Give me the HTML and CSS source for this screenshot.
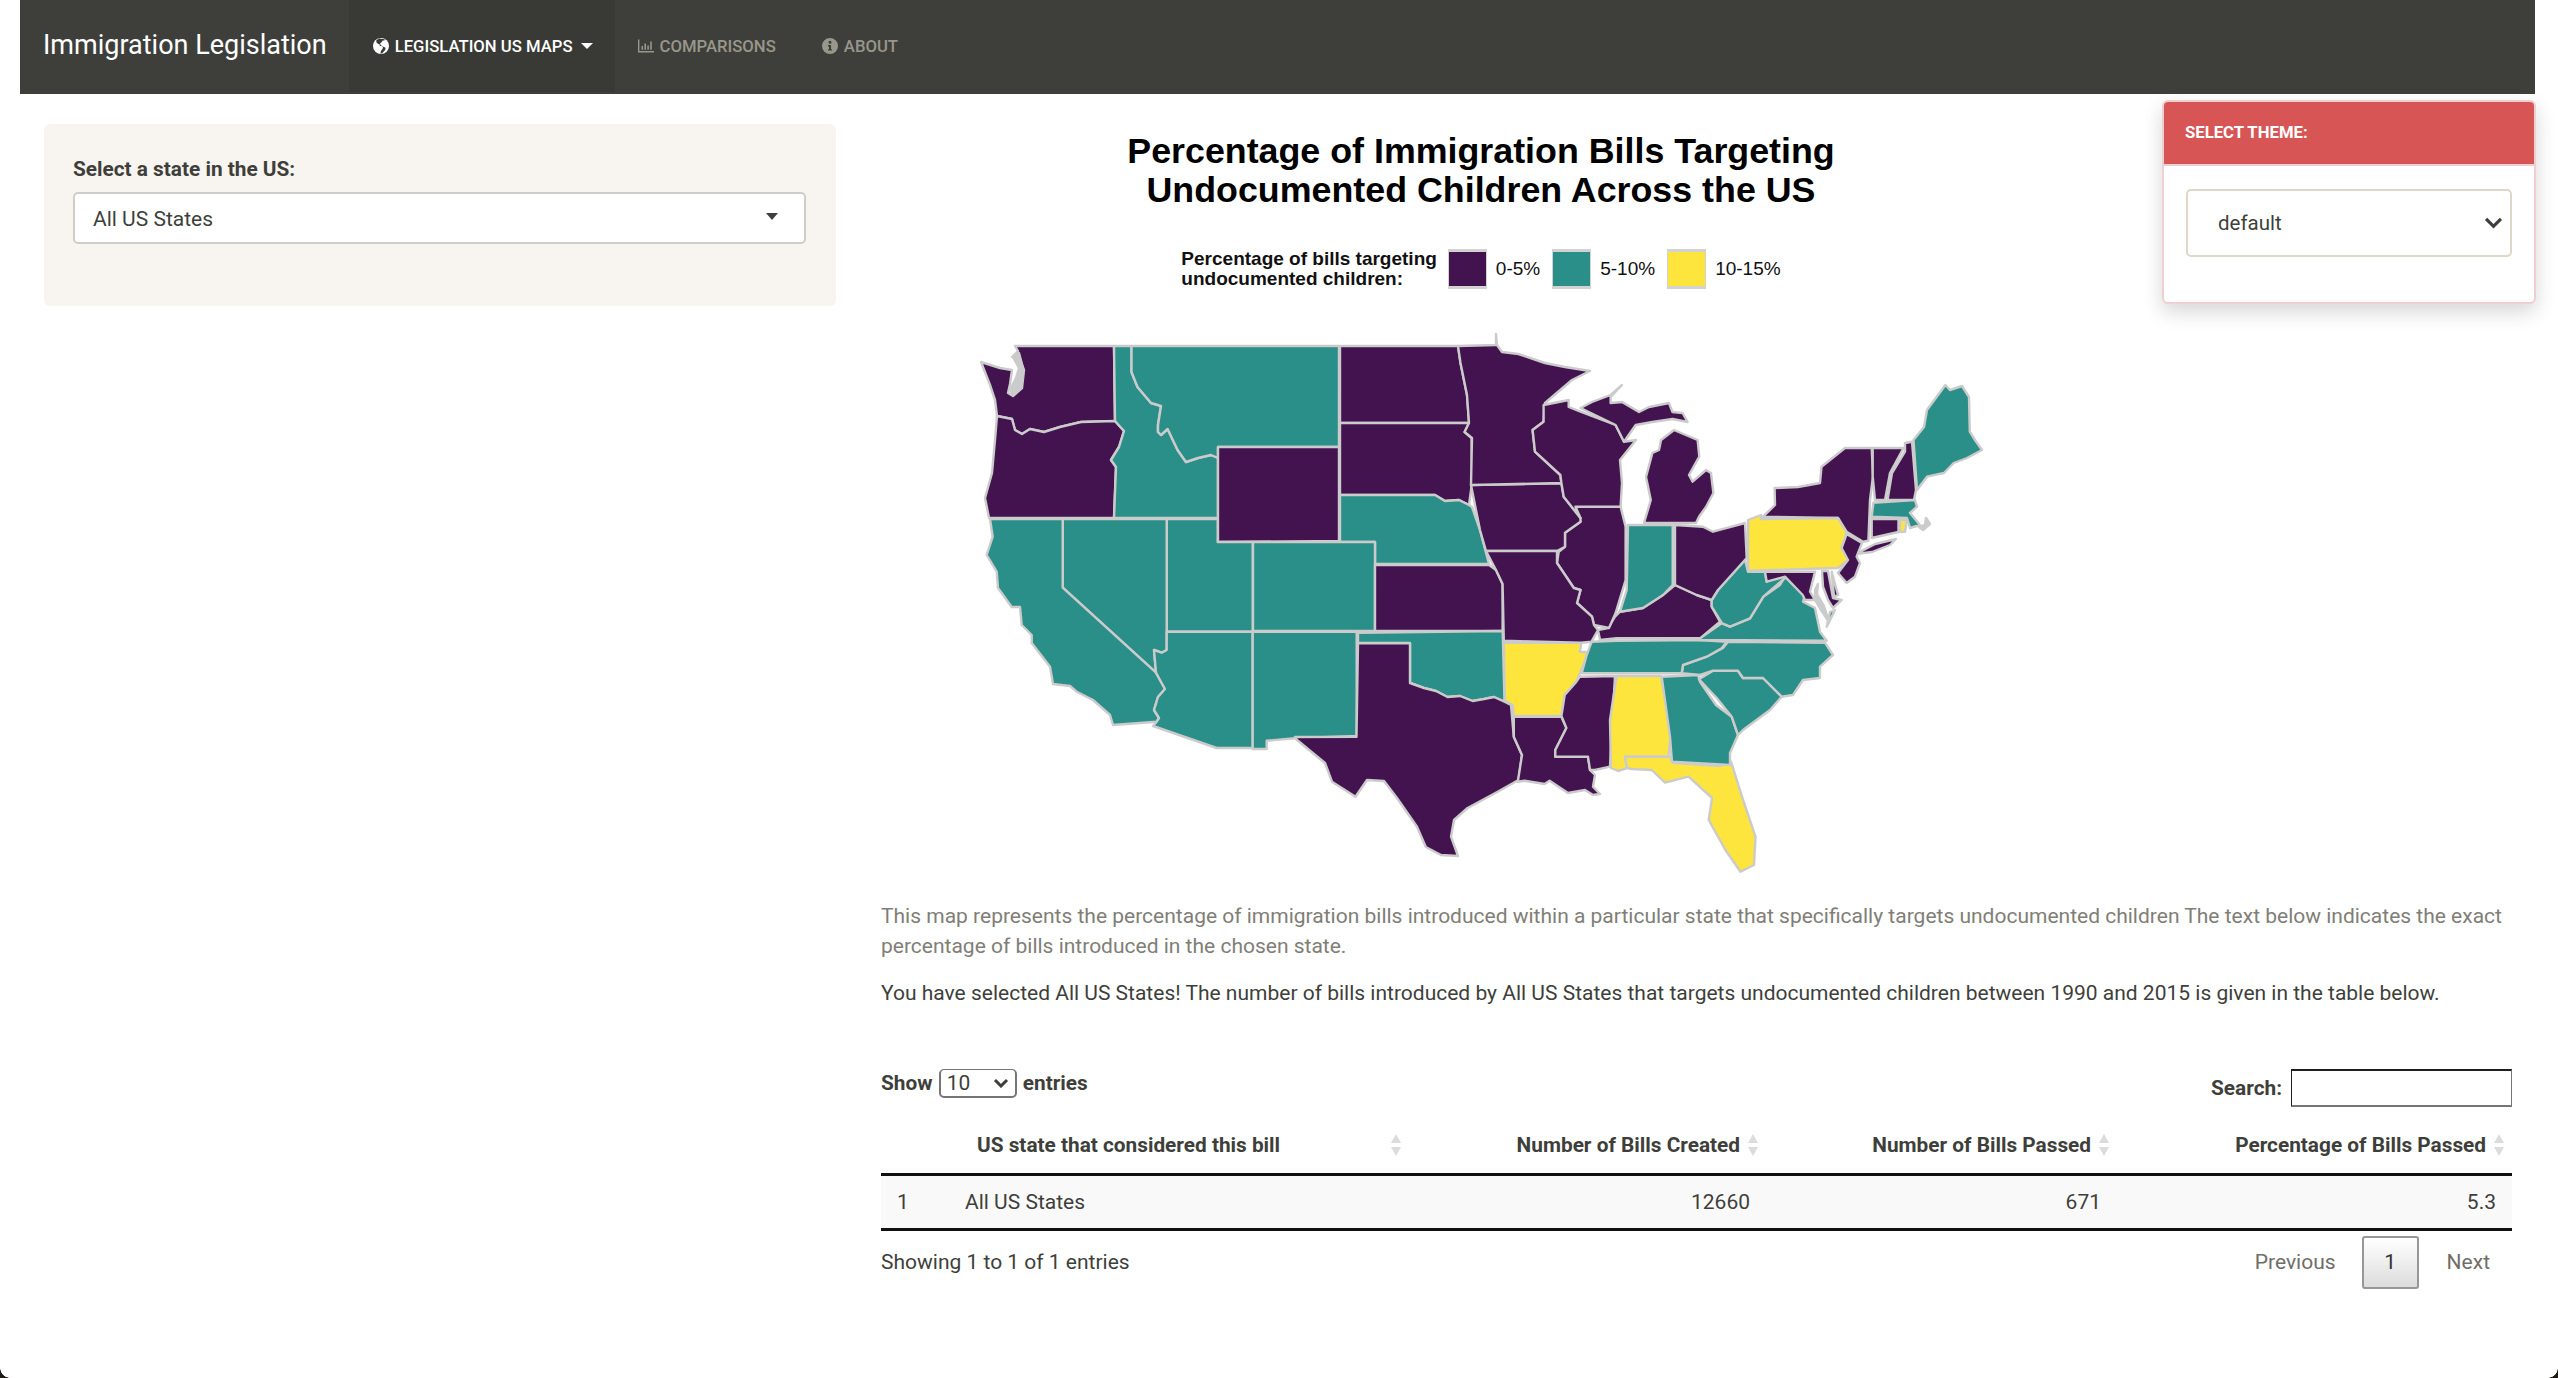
FILE: index.html
```html
<!DOCTYPE html>
<html lang="en">
<head>
<meta charset="utf-8">
<title>Immigration Legislation</title>
<link rel="stylesheet" href="styles.css">
</head>
<body>
<div class="page">
  <nav class="navbar">
    <a class="brand">Immigration Legislation</a>
    <a class="nav-link active">
      <svg class="ico" viewBox="0 0 16 16"><circle cx="8" cy="8" r="8" fill="#fff"/><path class="ico-cut" d="M6 .6 3.2 2.6l.4 2.2 2.2 1.4 2 .2.6 1.6 1.6 1-.6 2.2-1.4 1.6-.6 2.6 1.8-.2 3-3.2.4-2.2-2.2-1-1.8-1-1.6.2-.6-1.4L9 3.600l.8-1 1.600-.2.400-1.200z"/></svg>
      LEGISLATION US MAPS
      <span class="caret"></span>
    </a>
    <a class="nav-link">
      <svg class="ico" viewBox="0 0 16 16"><path class="ico-muted" d="M0 1.500h1.400v11.600H16v1.400H0z"/><path class="ico-muted" d="M3.500 8h1.600v3.800H3.500zM6.400 5.500H8v6.300H6.400zM9.300 7.500h1.600v4.300H9.300zM12.200 3.500h1.600v8.300h-1.600z"/></svg>
      COMPARISONS
    </a>
    <a class="nav-link">
      <svg class="ico" viewBox="0 0 16 16"><path class="ico-muted" fill-rule="evenodd" d="M8 0a8 8 0 1 1 0 16A8 8 0 0 1 8 0zM8 2.800a1.500 1.500 0 1 0 0 3 1.500 1.500 0 0 0 0-3zM6 7v1.400h1v2.800H6v1.400h4v-1.400H9V7z"/></svg>
      ABOUT
    </a>
  </nav>

  <div class="layout">
    <aside class="well">
      <div class="field-label">Select a state in the US:</div>
      <div class="fake-select">
        <span>All US States</span>
        <span class="select-caret"></span>
      </div>
    </aside>

    <main class="main">
      <section class="plot">
        <h2 class="plot-title">Percentage of Immigration Bills Targeting<br>Undocumented Children Across the US</h2>
        <div class="legend">
          <div class="legend-title">Percentage of bills targeting<br>undocumented children:</div>
          <span class="swatch s-p"></span><span class="legend-text">0-5%</span>
          <span class="swatch s-t"></span><span class="legend-text">5-10%</span>
          <span class="swatch s-y"></span><span class="legend-text">10-15%</span>
        </div>
        <svg class="map" viewBox="881 300 1200 590" width="1200" height="590" role="img" aria-label="US map">
          <g class="st">
            <!-- WA -->
            <path class="p" d="M1015 346H1114L1115 421 1081 422 1060 427 1044 432 1030 429 1022 434 1015 430 1012 419 997 416 995 400 990 385 981 362 1000 368 1012 370 1010 384 1008 393 1013 396 1022 388 1024 370 1020 360 1012 357 1018 351Z"/>
            <!-- Puget Sound -->
            <path class="g" d="M1013 357 1019 353 1023 368 1021 387 1013 395 1010 390 1016 378 1019 368Z"/>
            <!-- OR -->
            <path class="p" d="M997 416 1012 419 1015 430 1022 434 1030 429 1044 432 1060 427 1081 422 1115 421 1124 431 1119 447 1111 460 1116 467 1114 518H989L985 498 992 473 995 440Z"/>
            <!-- ID -->
            <path class="t" d="M1114 346H1131.500V372L1137.500 387 1151 403 1161 406 1158 425 1158 432 1161 435 1167.600 429 1177.600 450 1186 462 1198 458 1211 455 1218 458V518H1114L1116 467 1111 460 1119 447 1124 431 1115 421Z"/>
            <!-- MT -->
            <path class="t" d="M1131.500 346H1339V447H1218V458L1211 455 1198 458 1186 462 1177.600 450 1167.600 429 1161 435 1158 432 1158 425 1161 406 1151 403 1137.500 387 1131.500 372Z"/>
            <!-- WY -->
            <path class="p" d="M1218 447H1339V541L1218 542Z"/>
            <!-- ND -->
            <path class="p" d="M1340 346H1458L1460.500 363 1467 395 1469 423H1340Z"/>
            <!-- SD -->
            <path class="p" d="M1340 423H1469L1464.600 432 1471.600 438 1472 483 1469 505 1459 500 1445 501 1435 495H1340Z"/>
            <!-- NE -->
            <path class="t" d="M1340 495H1435L1445 501 1459 500 1469 505 1472 507 1480 530 1489 564H1375V542H1340Z"/>
            <!-- CO -->
            <path class="t" d="M1253 542H1375V631H1253Z"/>
            <!-- KS -->
            <path class="p" d="M1375 565H1489L1496 570 1502.600 584V631H1375Z"/>
            <!-- UT -->
            <path class="t" d="M1166.700 519H1217.700V542H1252.700V631.700H1166.700Z"/>
            <!-- NV -->
            <path class="t" d="M1062.700 519H1166.700V650L1161.700 652.700 1154 650 1156 672.700 1062.700 587.700Z"/>
            <!-- CA -->
            <path class="t" d="M990 519H1062.700V587.700L1156 672.700 1160 680 1165 689 1158 697 1154 710 1159 718 1156.700 721.700 1113 725 1110 715 1093 700 1076.700 691.700 1070 686 1053 684 1050 666.700 1031.700 643V635L1021.700 625 1020 607H1011.700L998 588 996.700 571.700 986.700 555 992.700 536.700Z"/>
            <!-- AZ -->
            <path class="t" d="M1166.700 631.700H1252.700V748H1216.700L1153 726 1156.700 721.700 1159 718 1154 710 1158 697 1165 689 1160 680 1156 672.700 1154 650 1161.700 652.700 1166.700 650Z"/>
            <!-- NM -->
            <path class="t" d="M1252.700 631.700H1356.700V736L1295 738.300 1266.700 740.700V749H1252.700Z"/>
            <!-- OK -->
            <path class="t" d="M1358 632.700 1502.700 631 1504.500 701.700 1494 697 1484 699 1472.600 701 1460 696 1447.500 697 1436 691 1424 688 1410 683V643H1358Z"/>
            <!-- TX -->
            <path class="p" d="M1358 643.300H1410V683L1424 688 1436 691 1447.500 697 1460 696 1472.600 701 1484 699 1494 697 1505 702 1511 705 1513.800 736.700 1522 755 1518.500 780 1497.700 791.700 1467.600 808 1454 820 1451 836.700 1458 856 1441 855 1425.800 847 1417 826.700 1397 798 1384 781 1367 780 1355.500 796.700 1332 781.700 1325 763 1297 740 1295 737 1356.500 736.700Z"/>
            <!-- AR -->
            <path class="y" d="M1503.800 642.700H1581.400L1579.800 651.700 1588 652.300 1581.400 670 1576.400 681.700 1564.700 695 1561.400 716H1513.800L1512.800 705 1505 701Z"/>
            <!-- LA -->
            <path class="p" d="M1513.800 716.700H1561.400L1566.400 728 1555.300 750V756.700H1588L1590 770 1595 775 1593 786.700 1600 794 1593 795 1585 790 1568 793 1549.600 780.700 1544.600 784 1524.500 780.700 1517.800 781.700 1522 755 1513.800 736.700Z"/>
            <!-- MS -->
            <path class="p" d="M1579.800 676.700 1615 676 1610 766.700 1595 770 1590 770 1588 756.700H1555.300V750L1566.400 728 1561.400 716 1564.700 695 1576.400 681.700Z"/>
            <!-- AL -->
            <path class="y" d="M1616.600 676H1661L1671 730 1668.500 756.700H1625L1627 768 1618 771 1611 768 1610 720Z"/>
            <!-- FL -->
            <path class="y" d="M1625 756.700H1670L1672.500 762.700 1720 766 1731 761.700 1742 796.700 1755.500 836.700 1754 865 1740.500 871.700 1725.400 850 1708.700 820 1712 798 1688.600 776.700 1665 782.700 1651.700 770 1631.600 769 1627 768Z"/>
            <!-- GA -->
            <path class="t" d="M1661.700 676.700 1698 675 1700 681.700 1716 705 1731.700 716.700 1738 735 1730 753V765L1672 761.700 1670 737Z"/>
            <!-- SC -->
            <path class="t" d="M1699 679.300 1713 670.700H1738L1743 678H1763L1781.700 696.700 1770 710 1743 730 1738 735 1731.700 716.700 1716.700 698Z"/>
            <!-- NC -->
            <path class="t" d="M1728 641.700 1825 642.700 1833 655 1820 666.700V678L1803 680 1793 695 1781.700 696.700 1763 678H1743L1738 670.700H1713L1700 675 1681.700 673.300 1683 665 1706.700 656.700 1723 648Z"/>
            <!-- TN -->
            <path class="t" d="M1591.700 641.700 1616.700 640.700 1700 640 1726.700 641.700 1722 648 1706.700 656.700 1683 665 1681.700 673.300H1581.700L1586.700 655Z"/>
            <!-- VA -->
            <path class="t" d="M1700 638.300 1721.700 623.300 1730 626.700 1750 618.300 1763.300 596.700 1780 585 1785 576.700 1805 595 1803 601.700 1815 608 1820 631.700 1826.700 640.700 1700 640Z"/>
            <!-- KY -->
            <path class="p" d="M1600 640 1616.700 638.300H1693L1700 638.300 1720 621.700 1711.700 606.700V600L1696.700 595 1675 585 1663 595 1643 608 1620 611.700 1615 616.700 1608 628 1598 630Z"/>
            <!-- WV -->
            <path class="t" d="M1711.700 600 1718 590 1745 560 1748 571.700H1765L1766.700 581.700 1783 575 1785 578 1763.300 596.700 1750 618.300 1730 626.700 1721.700 623 1711.700 606.700Z"/>
            <!-- OH -->
            <path class="p" d="M1675 525 1703 526.700 1713 531.700 1745 523 1746.700 558 1718 590 1711.700 600 1696.700 595 1675 585Z"/>
            <!-- IN -->
            <path class="t" d="M1628 525H1672.700V585L1663 595 1643 608 1620 611.700 1626.700 590Z"/>
            <!-- IL -->
            <path class="p" d="M1575.400 506.700H1620.600L1625.600 526.700V580L1615.600 613 1609 628 1594 625 1592 616.700 1577 603 1580.500 590 1573.800 588 1557 563 1558.700 551.700 1565 546.700V532.700L1580.500 521.700Z"/>
            <!-- IA -->
            <path class="p" d="M1471 485 1561.400 483.300 1563.700 496.700 1580.500 518V521.700L1565 532.700V546.700L1557 551 1486 551 1480 530Z"/>
            <!-- MO -->
            <path class="p" d="M1486 551H1557V563L1573.800 588 1580.500 590 1577 603 1592 616.700 1594 625 1598 630 1591.500 641.700 1581 642.700 1503.800 640.700 1502.600 584 1496 570Z"/>
            <!-- MN -->
            <path class="p" d="M1458 346 1496 345V334L1497 345 1502 352 1518.500 354 1545 363 1565 367 1590 371 1572 380 1545 403 1543.600 421.700 1532.600 430 1535 451.700 1560.400 475 1561.400 483 1471 485 1472 438 1464.600 432 1469 423 1467 395 1460.500 363Z"/>
            <!-- WI -->
            <path class="p" d="M1543.600 405 1568.700 400 1568.700 407 1580.500 411.700 1615.600 425 1624 441.700 1636 440 1620 460 1622 483 1620.600 506.700H1575.400L1580.500 518 1563.700 496.700 1561.400 483 1560.400 475 1535 451.700 1532.600 430 1543.600 421.700Z"/>
            <!-- MI up -->
            <path class="p" d="M1580.500 408 1592 402 1610.600 395 1622 385 1610.600 397V403L1622 402 1639 412 1649 407 1669 403 1672.500 412 1682.600 413 1687.600 422 1672.500 419 1652.400 422 1635.700 425 1624 441.700 1615.600 425Z"/>
            <!-- MI low -->
            <path class="p" d="M1674 430 1697.600 440 1699.300 456.700 1689 475 1692.600 481.700 1706 470 1711 473 1713.400 493 1706 507 1699 516.700 1696 523H1644L1650.800 500 1646 477 1652.400 453 1659 450 1661 440Z"/>
            <!-- NY -->
            <path class="p" d="M1763 516.700 1775 505 1774.600 488 1798 487 1820 483 1821.500 466.700 1845 448H1871.700L1873 476 1870 500 1868.400 540.800 1863 541.700 1846.600 531.700 1838 518Z"/>
            <!-- LI -->
            <path class="p" d="M1856 554 1875 544 1896 539 1890 545 1872 552Z"/>
            <!-- PA -->
            <path class="y" d="M1748 520 1761 515V519L1838 518 1846.600 533 1841.600 548 1848.300 560 1838 568 1748 570.700Z"/>
            <!-- NJ -->
            <path class="p" d="M1846.600 534 1862 543 1856.600 556.700 1860 563 1855 576.700 1846.600 583 1838 573 1848 560 1841.600 548Z"/>
            <!-- VT -->
            <path class="p" d="M1872.700 448H1903.500L1890 473 1885 500H1875L1872.700 476.700Z"/>
            <!-- NH -->
            <path class="p" d="M1905 443 1912 441.700 1916 490 1914 500H1887.500L1892 473 1905 451.700Z"/>
            <!-- ME -->
            <path class="t" d="M1913.500 440 1924 427 1927 410 1945.400 385 1950 390 1962 386 1969 397 1969.800 431.700 1975 440 1982 450 1967 458 1953.700 463 1944 473 1927 476.700 1917 490Z"/>
            <!-- MA -->
            <path class="t" d="M1873.400 502.700 1915 500 1917 506.700 1910 513 1920 525 1910 528 1907 518 1871.700 516.700Z"/>
            <!-- CT -->
            <path class="p" d="M1871.700 519H1898.500V532L1871.700 538Z"/>
            <!-- RI -->
            <path class="y" d="M1900 520H1907L1905 531.700 1900 532Z"/>
            <!-- MD -->
            <path class="p" d="M1765 571.700H1815L1810 591.700 1815 600H1805L1802.700 595 1785 576.700 1766.700 581.700Z"/>
            <path class="p" d="M1822 571H1828L1833 598 1841.700 600 1833 608 1828 600 1823 586.700Z"/>
            <!-- DE -->
            <path class="p" d="M1831.700 571.700 1838 595 1834 596.700Z"/>
            <!-- Chesapeake -->
            <path class="g" d="M1818 584 1817 594 1824 606 1829 622 1821 610 1815 600 1815 590Z"/>
            <!-- VA shore -->
            <path class="t" d="M1835 610 1826.700 626.700 1830 612Z"/>
            <!-- Cape -->
            <path class="g" d="M1919 527 1925 525 1926 518 1930 524 1923 530Z"/>
          </g>
        </svg>
      </section>

      <p class="muted-copy">This map represents the percentage of immigration bills introduced within a particular state that specifically targets undocumented children The text below indicates the exact percentage of bills introduced in the chosen state.</p>
      <p class="copy">You have selected All US States! The number of bills introduced by All US States that targets undocumented children between 1990 and 2015 is given in the table below.</p>

      <div class="dt-top">
        <label class="dt-length">Show <select class="len"><option>10</option></select> entries</label>
        <label class="dt-search">Search: <input class="search" type="text"></label>
      </div>

      <table class="dt">
        <colgroup><col class="c1"><col class="c2"><col class="c3"><col class="c4"><col class="c5"></colgroup>
        <thead>
          <tr>
            <th></th>
            <th><div class="th-in th-left"><span>US state that considered this bill</span><svg class="sort" viewBox="0 0 12 22"><path d="M6 0 11 9H1zM6 22 1 13H11z"/></svg></div></th>
            <th><div class="th-in"><span>Number of Bills Created</span><svg class="sort" viewBox="0 0 12 22"><path d="M6 0 11 9H1zM6 22 1 13H11z"/></svg></div></th>
            <th><div class="th-in"><span>Number of Bills Passed</span><svg class="sort" viewBox="0 0 12 22"><path d="M6 0 11 9H1zM6 22 1 13H11z"/></svg></div></th>
            <th><div class="th-in"><span>Percentage of Bills Passed</span><svg class="sort" viewBox="0 0 12 22"><path d="M6 0 11 9H1zM6 22 1 13H11z"/></svg></div></th>
          </tr>
        </thead>
        <tbody>
          <tr>
            <td>1</td>
            <td>All US States</td>
            <td class="num">12660</td>
            <td class="num">671</td>
            <td class="num">5.3</td>
          </tr>
        </tbody>
      </table>

      <div class="dt-bottom">
        <div class="dt-info">Showing 1 to 1 of 1 entries</div>
        <div class="pager">
          <a class="pg">Previous</a>
          <a class="pg current">1</a>
          <a class="pg">Next</a>
        </div>
      </div>
    </main>
  </div>
</div>

<aside class="theme-panel">
  <div class="theme-head">SELECT THEME:</div>
  <div class="theme-body">
    <select class="theme-select"><option>default</option></select>
  </div>
</aside>
<span class="corner corner-l"></span>
<span class="corner corner-r"></span>
</body>
</html>
```

FILE: styles.css
```css
* { box-sizing: border-box; }
html, body { margin: 0; padding: 0; background: #fff; }
body {
  font-family: Roboto, "Liberation Sans", sans-serif;
  font-size: 21px;
  color: #3e3f3a;
  height: 1378px;
  overflow: hidden;
}
.page { margin-left: 20px; width: 2515px; }

/* navbar */
.navbar {
  display: flex;
  align-items: stretch;
  height: 94px;
  background: #3e3f3a;
  padding-left: 23px;
}
.brand {
  color: #fff;
  font-size: 27px;
  line-height: 90px;
  margin-right: 22px;
}
.nav-link {
  display: flex;
  align-items: center;
  gap: 6px;
  height: 92px;
  padding: 0 23px;
  color: #98978b;
  font-size: 16.700px;
  font-weight: 500;
}
.nav-link.active { background: #393a35; color: #fff; padding: 0 22px 0 24px; }
.ico { width: 16px; height: 16px; flex: none; }
.ico-cut { fill: #393a35; }
.ico-muted { fill: #98978b; }
.caret {
  width: 0; height: 0;
  margin-left: 2px;
  border-left: 6px solid transparent;
  border-right: 6px solid transparent;
  border-top: 6px solid #fff;
}

/* layout */
.layout {
  display: grid;
  grid-template-columns: 792px 1631px;
  column-gap: 45px;
  align-items: start;
  padding: 30px 0 0 24px;
}
.well {
  height: 182px;
  background: #f8f5f0;
  border-radius: 6px;
  padding: 33px 30px 0 29px;
}
.field-label { font-weight: 700; font-size: 20.800px; line-height: 24px; margin-bottom: 11px; }
.fake-select {
  display: flex;
  align-items: center;
  justify-content: space-between;
  height: 52px;
  padding: 2px 26px 0 18px;
  background: #fff;
  border: 2px solid #cfcdc9;
  border-radius: 5px;
}
.select-caret {
  width: 0; height: 0;
  margin-top: -5px;
  border-left: 6.500px solid transparent;
  border-right: 6.500px solid transparent;
  border-top: 7px solid #3e3f3a;
}

/* plot */
.plot { width: 1200px; padding-top: 8px; }
.plot-title {
  margin: 0;
  font-family: "Liberation Sans", Arial, sans-serif;
  font-size: 35.800px;
  font-weight: 700;
  line-height: 39px;
  text-align: center;
  color: #000;
}
.legend {
  display: flex;
  justify-content: center;
  align-items: center;
  margin-top: 39px;
  height: 40px;
  font-family: "Liberation Sans", Arial, sans-serif;
  font-size: 19px;
  color: #111;
}
.legend-title { font-weight: 700; line-height: 20.500px; margin-right: 11px; }
.swatch { width: 39px; height: 40px; border: 3px solid #d2d2d2; border-width: 3px 1px; }
.legend-text { margin: 0 12px 0 9px; }
.legend-text:last-child { margin-right: 0; }
.s-p { background: #431350; }
.s-t { background: #2a8f89; }
.s-y { background: #fde53d; }

.map { display: block; margin-top: 11px; filter: blur(.35px); }
.st path { stroke: #cbcbcb; stroke-width: 2.400; stroke-linejoin: round; }
.p { fill: #431350; }
.t { fill: #2a8f89; }
.y { fill: #fde53d; }
.g { fill: #cbcbcb; }

/* copy */
.muted-copy, .copy { margin: 0; line-height: 29.500px; }
.muted-copy { margin-top: 12px; color: #807e76; }
.copy { margin-top: 17.500px; }

/* data table */
.dt-top {
  display: flex;
  justify-content: space-between;
  align-items: flex-start;
  margin-top: 61px;
  font-weight: 700;
  font-size: 20.800px;
}
.len {
  appearance: none;
  width: 78px;
  height: 29px;
  margin: 0 1px;
  padding: 0 0 0 6px;
  font: 400 21px Roboto, sans-serif;
  color: #3e3f3a;
  background: #fff url("data:image/svg+xml;utf8,<svg xmlns='http://www.w3.org/2000/svg' viewBox='0 0 16 10'><path d='M2 2l6 6 6-6' fill='none' stroke='%233e3f3a' stroke-width='3'/></svg>") no-repeat right 6px center / 16px 10px;
  border: 2px solid #767676;
  border-top-width: 1px;
  border-radius: 5px;
}
.dt-search { display: flex; align-items: center; gap: 9px; }
.search {
  width: 221px;
  height: 38px;
  padding: 0;
  background: #fff;
  border-style: solid;
  border-width: 2px 1px;
  border-color: #1f1f1f #767676 #767676 #1f1f1f;
}
.dt {
  width: 1631px;
  table-layout: fixed;
  border-collapse: collapse;
  margin-top: 13px;
}
.c1 { width: 68px; }
.c2 { width: 456px; }
.c3 { width: 361px; }
.c4 { width: 351px; }
.c5 { width: 395px; }
.dt th {
  height: 54px;
  padding: 0 0 3px 16px;
  border-bottom: 3px solid #111;
  font-weight: 700;
  font-size: 20.800px;
}
.th-in { display: flex; justify-content: flex-end; align-items: center; gap: 7px; padding-right: 7px; }
.th-left { justify-content: space-between; padding-left: 12px; padding-right: 3px; }
.sort { width: 12px; height: 22px; flex: none; }
.sort path { fill: #dcdcdc; }
.dt td {
  height: 55px;
  padding: 0 16px;
  background: #f9f9f9;
  border-bottom: 3px solid #111;
}
.dt td.num { text-align: right; }
.dt-bottom {
  display: flex;
  justify-content: space-between;
  align-items: flex-start;
  margin-top: 5px;
}
.dt-info { padding-top: 14px; }
.pager { display: flex; align-items: center; margin-right: 22px; }
.pg { color: #6f6e68; padding: 0 25px; }
.pg:last-child { padding: 0; }
.pg:first-child { padding-right: 26px; }
.pg.current {
  width: 57px;
  height: 53px;
  padding: 0;
  margin-right: 28px;
  display: flex;
  align-items: center;
  justify-content: center;
  color: #333;
  background: linear-gradient(#fff, #dcdcdc);
  border: 2px solid #979797;
  border-radius: 3px;
}

/* theme panel */
.theme-panel {
  position: absolute;
  left: 2162px;
  top: 100px;
  width: 374px;
  height: 204px;
  background: #fff;
  border: 2px solid #efcfd0;
  border-radius: 6px;
  box-shadow: 0 8px 20px rgba(0, 0, 0, .16);
}
.theme-head {
  height: 64px;
  padding: 0 0 0 21px;
  background: #d85555;
  border-bottom: 2px solid #efcfd0;
  border-radius: 4px 4px 0 0;
  color: #fff;
  font-size: 16.700px;
  font-weight: 700;
  line-height: 62px;
}
.theme-body { padding: 23px 22px; }
.theme-select {
  appearance: none;
  display: block;
  width: 326px;
  height: 68px;
  padding: 0 0 0 30px;
  font: 400 20.500px Roboto, sans-serif;
  color: #3e3f3a;
  background: #fff url("data:image/svg+xml;utf8,<svg xmlns='http://www.w3.org/2000/svg' viewBox='0 0 20 14'><path d='M2 2l8 8 8-8' fill='none' stroke='%233e3f3a' stroke-width='3.500'/></svg>") no-repeat right 7px center / 19px 13px;
  border: 2px solid #dfd7ca;
  border-radius: 5px;
}

/* window corners */
.corner { position: absolute; bottom: 0; width: 10px; height: 10px; }
.corner-l { left: 0; background: radial-gradient(circle at 100% 0, transparent 9.500px, #1f1a14 10px); }
.corner-r { right: 0; background: radial-gradient(circle at 0 0, transparent 9.500px, #1f1a14 10px); }
```
